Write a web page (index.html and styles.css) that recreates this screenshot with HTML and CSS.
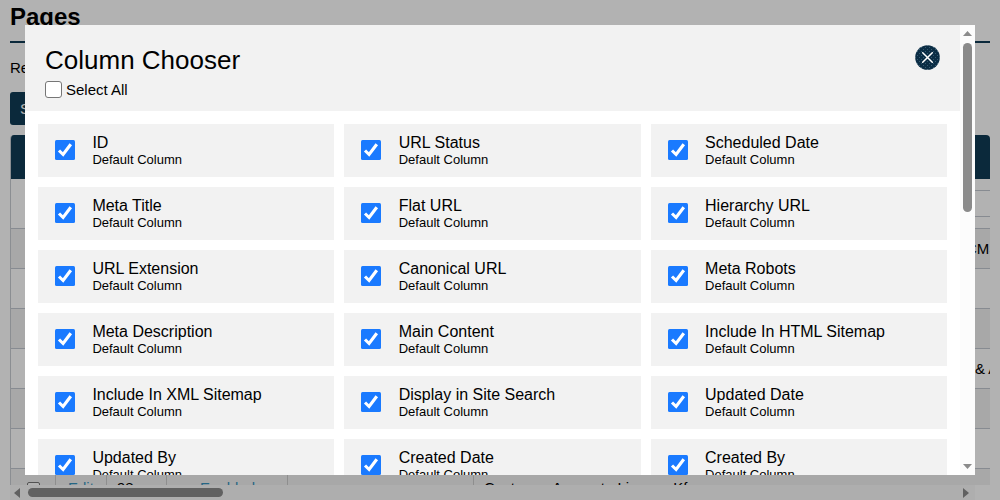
FILE: index.html
```html
<!DOCTYPE html>
<html lang="en">
<head>
    <meta charset="UTF-8">
    <meta name="viewport" content="width=device-width, initial-scale=1.0">
    <title>Pages</title>
    <link rel="stylesheet" href="styles.css">
</head>
<body>
    <div class="page">
        <h1>Pages</h1>
        <p class="records">Records</p>
        <button class="btn">Show</button>
        <div class="table">
            <div class="table-head"></div>
            <div class="filter-row"><div class="filter-input"></div></div>
            <div class="row"><span class="row-end">CMS</span></div>
            <div class="row"></div>
            <div class="row"></div>
            <div class="row"><span class="row-end short">&amp; A</span></div>
            <div class="row"></div>
            <div class="row"></div>
            <div class="row cells">
                <div class="cell c-check"><span class="box"></span></div>
                <div class="cell c-edit"><a>Edit</a></div>
                <div class="cell c-id">98</div>
                <div class="cell c-status"><a>Enabled</a></div>
                <div class="cell c-empty"></div>
                <div class="cell c-title">Customer Appreate Licence Kf</div>
            </div>
        </div>
        <div class="hscroll">
            <svg width="6" height="10" viewBox="0 0 6 10"><path d="M6 0v10L0 5z"/></svg>
            <div class="hthumb"></div>
            <svg width="6" height="10" viewBox="0 0 6 10"><path d="M0 0v10l6-5z"/></svg>
        </div>
    </div>

    <div class="overlay">
        <div class="modal">
            <div class="modal-main">
                <div class="modal-header">
                    <div>
                        <h2>Column Chooser</h2>
                        <label class="select-all"><span class="box"></span>Select All</label>
                    </div>
                    <svg class="close" width="25" height="25" viewBox="0 0 25 25">
                        <defs>
                            <pattern id="dots" width="4" height="4" patternUnits="userSpaceOnUse">
                                <rect width="4" height="4" fill="#0b2d45"/>
                                <rect width="1" height="1" fill="#355a70"/>
                                <rect x="2" y="2" width="1" height="1" fill="#355a70"/>
                            </pattern>
                        </defs>
                        <circle cx="12.5" cy="12.5" r="12.3" fill="url(#dots)"/>
                        <path d="M7.700 7.700l9.600 9.600M17.300 7.700l-9.600 9.600" stroke="#fff" stroke-width="1.500" stroke-linecap="round"/>
                    </svg>
                </div>
                <div class="columns" id="columns"></div>
            </div>
            <div class="vscroll">
                <svg width="9" height="5" viewBox="0 0 9 5"><path d="M0 5h9L4.500 0z"/></svg>
                <div class="vthumb"></div>
                <svg class="down" width="9" height="5" viewBox="0 0 9 5"><path d="M0 0h9L4.500 5z"/></svg>
            </div>
        </div>
    </div>

    <script>
        const columns = [
            'ID', 'URL Status', 'Scheduled Date',
            'Meta Title', 'Flat URL', 'Hierarchy URL',
            'URL Extension', 'Canonical URL', 'Meta Robots',
            'Meta Description', 'Main Content', 'Include In HTML Sitemap',
            'Include In XML Sitemap', 'Display in Site Search', 'Updated Date',
            'Updated By', 'Created Date', 'Created By'
        ];

        document.getElementById('columns').innerHTML = columns.map(name => `
            <div class="column">
                <svg class="check" width="20" height="20" viewBox="0 0 20 20">
                    <rect width="20" height="20" rx="1.5" fill="#1a7aff"/>
                    <path d="M4 10.500l4.100 4L15.800 4.200" fill="none" stroke="#fff" stroke-width="3.100"/>
                </svg>
                <div>
                    <div class="name">${name}</div>
                    <div class="type">Default Column</div>
                </div>
            </div>`).join('');
    </script>
</body>
</html>
```
FILE: styles.css
```css
* {
    box-sizing: border-box;
}
body {
    margin: 0;
    height: 500px;
    overflow: hidden;
    font-family: "Liberation Sans", Arial, sans-serif;
    font-size: 15px;
    color: #000;
    background-color: #fff;
}
.page {
    height: 500px;
    padding: 0 10px;
    display: flex;
    flex-direction: column;
    align-items: flex-start;
    overflow: hidden;
}
h1 {
    width: 980px;
    height: 43px;
    margin: 0;
    padding-top: 3px;
    font-size: 24px;
    line-height: 28px;
    border-bottom: 2px solid #103c55;
}
.records {
    margin: 15px 0 0;
    line-height: 20px;
}
.btn {
    height: 33px;
    margin: 14px 0 10px;
    padding: 0 10px;
    font: inherit;
    color: #fff;
    background-color: #103c55;
    border: none;
    border-radius: 3px;
}
.table {
    width: 980px;
    height: 350px;
    overflow: hidden;
    border-left: 1px solid #c8ccd2;
    border-radius: 4px 4px 0 0;
}
.table-head {
    height: 44px;
    background-color: #103c55;
}
.filter-row {
    height: 50px;
    padding: 11px 0 0 56px;
    border-bottom: 1px solid #c2c8d0;
}
.filter-input {
    height: 27px;
    border-top: 1px solid #c2c8d0;
    border-bottom: 1px solid #c2c8d0;
}
.row {
    height: 40px;
    display: flex;
    align-items: center;
    justify-content: flex-end;
    border-bottom: 1px solid #c2c8d0;
}
.row:nth-child(odd) {
    background-color: #f1f1f1;
}
.row-end {
    width: 24px;
    white-space: nowrap;
}
.short {
    width: 15px;
}
.cells {
    justify-content: flex-start;
}
.cell {
    height: 40px;
    line-height: 38px;
    flex: none;
    border-right: 1px solid #ccc;
}
.cell a {
    color: #3593bd;
}
.box {
    display: inline-block;
    width: 13px;
    height: 13px;
    background-color: #fff;
    border: 1px solid #767676;
    border-radius: 2px;
}
.c-check {
    width: 45px;
    padding: 13px 0 0 16px;
    line-height: 0;
}
.c-edit {
    width: 51px;
    padding-left: 12px;
}
.c-id {
    width: 60px;
    padding-left: 10px;
}
.c-status {
    width: 121px;
    padding-left: 33px;
}
.c-empty {
    width: 186px;
}
.c-title {
    padding-left: 10px;
    border-right: none;
}
.hscroll {
    width: 965px;
    height: 15px;
    flex: none;
    display: flex;
    align-items: center;
    padding: 0 6px 0 4px;
    background-color: #fafafa;
}
.hscroll svg {
    fill: #8b8b8b;
}
.hthumb {
    width: 195px;
    height: 9px;
    margin: 0 auto 0 8px;
    border-radius: 5px;
    background-color: #8b8b8b;
}
.overlay {
    position: absolute;
    top: 0;
    left: 0;
    width: 1000px;
    height: 500px;
    padding: 25px;
    background-color: rgba(0, 0, 0, 0.3);
}
.modal {
    height: 450px;
    display: flex;
    overflow: hidden;
    background-color: #fff;
}
.modal-main {
    flex: 1;
}
.modal-header {
    height: 86px;
    padding: 20px 20px 0;
    display: flex;
    justify-content: space-between;
    background-color: #f2f2f2;
}
h2 {
    margin: 0;
    font-size: 26px;
    font-weight: normal;
    line-height: 30px;
}
.select-all {
    height: 28px;
    display: flex;
    align-items: center;
    gap: 4px;
}
.select-all .box {
    width: 17px;
    height: 17px;
    border-radius: 3px;
}
.columns {
    padding: 13px;
    display: grid;
    grid-template-columns: repeat(3, 1fr);
    gap: 10px;
}
.column {
    height: 53px;
    padding: 0 17px;
    display: flex;
    gap: 17.4px;
    background-color: #f2f2f2;
}
.check {
    margin-top: 16px;
}
.name {
    padding-top: 10px;
    font-size: 16px;
    line-height: 18px;
}
.type {
    font-size: 13px;
    line-height: 15px;
}
.vscroll {
    width: 15px;
    padding: 6px 0;
    display: flex;
    flex-direction: column;
    align-items: center;
    background-color: #fcfcfc;
}
.vscroll svg {
    fill: #8b8b8b;
}
.vthumb {
    width: 9px;
    height: 169px;
    margin-top: 7px;
    border-radius: 5px;
    background-color: #8b8b8b;
}
.down {
    margin-top: auto;
}
```
